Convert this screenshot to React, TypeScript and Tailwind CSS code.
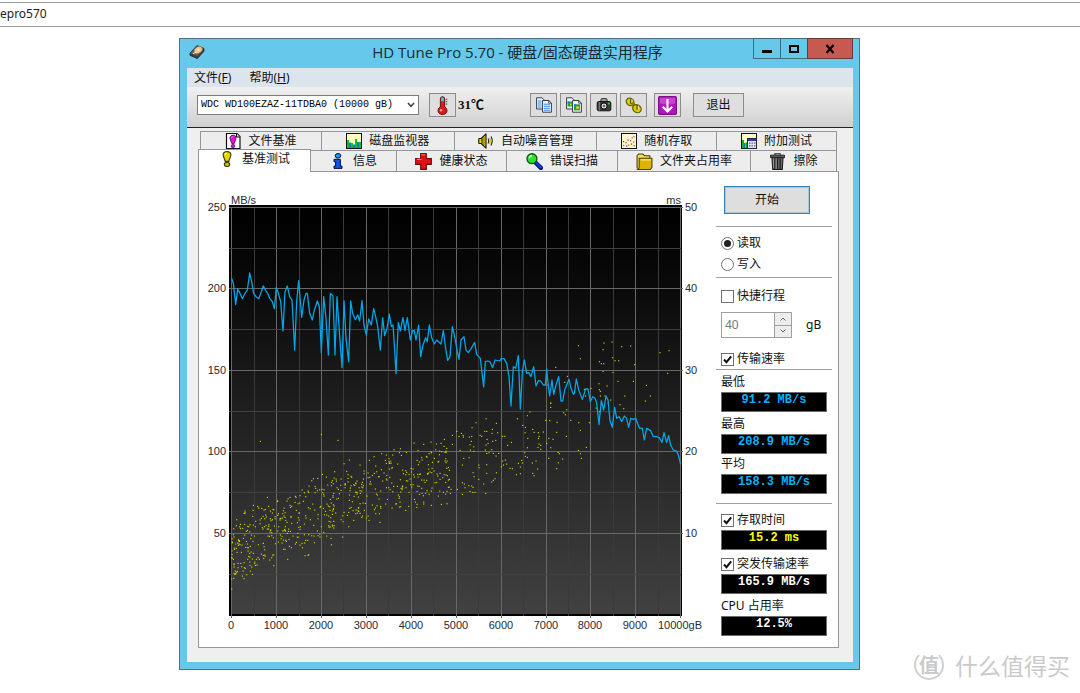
import type { ReactNode } from "react";

/* ---------- chart data (units: thirds of a chart pixel) ---------- */

const TRANSFER =
  "95,280 100,295 107,358 113,312 120,325 127,341 135,325 142,315 149,264 155,290 161,325 168,335 176,341 184,320 190,303 197,316 203,325 209,340 217,350 223,371 229,307 235,325 242,350 249,438 255,320 262,303 269,335 276,345 284,495 290,350 296,287 305,397 312,345 318,325 322,325 329,385 337,405 343,375 352,348 358,365 364,503 371,335 378,400 385,510 391,325 399,333 405,510 411,335 418,440 426,548 432,347 438,460 446,530 452,348 458,385 466,404 473,390 479,408 486,347 492,420 499,450 506,402 514,420 521,371 527,395 533,425 541,495 548,398 554,452 561,430 568,387 574,425 579,420 583,480 588,566 595,412 601,438 609,398 615,437 622,398 631,465 638,437 643,437 648,465 656,420 662,515 669,480 677,458 682,470 688,420 695,458 703,477 710,465 723,477 730,437 737,490 743,526 750,515 757,425 765,460 772,500 777,523 783,465 792,455 798,495 805,503 812,493 824,472 830,508 841,520 851,606 856,530 862,528 870,530 878,548 885,525 900,528 903,521 912,521 920,535 927,575 933,663 940,545 947,550 955,512 961,672 967,560 973,525 980,565 986,563 993,575 1001,545 1008,603 1015,587 1022,588 1030,600 1036,600 1040,552 1045,605 1049,633 1056,585 1061,628 1068,600 1076,575 1083,648 1088,648 1094,615 1107,583 1113,610 1120,628 1123,625 1129,582 1136,615 1147,643 1157,612 1164,612 1171,650 1178,635 1185,640 1190,654 1197,718 1204,647 1211,675 1218,633 1224,645 1230,707 1237,727 1244,667 1250,700 1258,695 1265,710 1273,693 1280,700 1286,727 1292,700 1300,703 1307,700 1318,729 1327,730 1333,765 1340,730 1352,737 1360,755 1370,755 1378,758 1386,772 1392,743 1400,773 1406,752 1412,780 1420,795 1430,798 1435,810 1442,838";

const SLOW_SEEKS =
  "415,482 421,521 347,547 323,600 382,574 374,592 332,654 433,613 436,633 453,610 492,474 516,471 489,494 545,485 572,483 518,518 525,527 536,527 478,530 484,536 491,536 489,559 519,562 584,539 660,503 687,497 683,565 619,601 580,589 534,589 631,633 616,648 554,633 477,596 478,614 481,619 501,603 481,633 495,633 512,645 505,655 540,659 551,671 468,669 478,680";

const SEEKS =
  "0,250 8,263 5,185 15,187 13,148 20,175 37,136 37,163 20,235 25,232 22,257 25,270 28,268 25,292 33,298 10,307 17,312 31,310 4,343 50,124 52,298 60,181 57,139 64,130 69,136 70,141 67,225 71,205 87,203 67,278 67,313 73,282 75,293 86,287 95,288 90,304 99,292 98,307 105,307 99,248 102,260 88,141 95,139 94,154 90,164 101,170 91,180 101,184 96,113 108,98 116,225 117,233 116,268 131,282 137,310 120,136 125,139 138,86 134,124 140,124 141,148 138,165 144,160 136,180 147,188 140,190 140,224 140,250 157,118 156,130 169,100 173,128 167,151 158,154 155,179 160,190 168,198 176,190 169,248 155,276 160,271 165,266 188,139 194,139 203,166 214,157 184,230 188,213 196,210 190,225 200,222 210,235 217,236 232,86 248,106 262,77 270,66 256,112 255,128 263,145 262,173 254,188 256,199 262,202 245,211 247,219 235,220 241,231 229,254 241,251 278,118 282,127 277,219 288,213 282,257 278,250 293,237 295,128 297,139 310,126 295,145 297,162 302,166 294,172 302,178 317,91 329,92 332,40 332,52 320,160 326,145 339,148 332,173 326,205 351,97 350,127 354,187 358,191 368,207 355,218 350,236 380,59 376,74 371,68 392,91 379,139 416,98 448,98 421,121 439,172 415,181 421,191 424,205";

type Point = [number, number];

const parse = (list: string, dx: number, dy: number): Point[] =>
  list.split(" ").map((pair) => {
    const [x, y] = pair.split(",").map(Number);
    return [x + dx, y + dy];
  });

/* Upper and lower edge of the dense part of the cloud: [x, top, bottom] */
const BAND: [number, number, number][] = [
  [95, 1010, 1225],
  [135, 970, 1200],
  [200, 945, 1150],
  [300, 880, 1125],
  [420, 830, 1080],
  [500, 805, 1040],
  [600, 770, 1000],
  [700, 750, 980],
  [750, 745, 955],
];

function denseCloud(): Point[] {
  let seed = 20;
  const rnd = () => {
    seed = (seed + 0x6d2b79f5) | 0;
    let t = Math.imul(seed ^ (seed >>> 15), 1 | seed);
    t = (t + Math.imul(t ^ (t >>> 7), 61 | t)) ^ t;
    return ((t ^ (t >>> 14)) >>> 0) / 4294967296;
  };
  const out: Point[] = [];
  for (let i = 0; i < 590; i++) {
    const x = 95 + 655 * Math.pow(rnd(), 1.2);
    let k = 0;
    while (k < BAND.length - 2 && BAND[k + 1][0] < x) k++;
    const [x0, t0, b0] = BAND[k];
    const [x1, t1, b1] = BAND[k + 1];
    const f = (x - x0) / (x1 - x0);
    const top = t0 + (t1 - t0) * f;
    const bottom = b0 + (b1 - b0) * f;
    const depth = rnd() * 0.75 + rnd() * 0.25;
    out.push([Math.round(x), Math.round(top + (bottom - top) * depth)]);
  }
  return out;
}

const DOTS: Point[] = [
  ...denseCloud(),
  [181, 769],
  [364, 748],
  [414, 766],
  [202, 937],
  [160, 961],
  [134, 985],
  ...parse(SEEKS, 720, 615),
  ...parse(SLOW_SEEKS, 720, 0),
];

const gridX = (i: number) => Math.round(31.2 + 22.45 * i) + 0.5;
const gridY = (i: number) => Math.round(21.9 + 40.75 * i) + 0.5;
const range = (n: number) => Array.from({ length: n }, (_, i) => i);

function Chart() {
  return (
    <svg viewBox="-1 0 517 450" className="block h-auto w-full" role="img" aria-label="MB/s">
      <defs>
        <linearGradient id="plot" x1="0" y1="0" x2="0" y2="1">
          <stop offset="0" stopColor="#000" />
          <stop offset="0.2" stopColor="#0a0a0a" />
          <stop offset="0.6" stopColor="#262626" />
          <stop offset="1" stopColor="#414141" />
        </linearGradient>
      </defs>
      <rect x="29" y="20" width="453" height="411" fill="#000" />
      <rect x="31" y="22" width="450" height="407" fill="url(#plot)" />
      <g strokeWidth="1">
        {range(21).map((i) => (
          <path key={i} d={`M${gridX(i)} 22V${i % 2 ? 431 : 433}`} stroke={i % 2 ? "#3a3a3a" : "#686868"} />
        ))}
        {range(10).map((i) => (
          <path key={i} d={`M29 ${gridY(i)}H${i % 2 ? 481 : 483}`} stroke={i % 2 ? "#404040" : "#686868"} />
        ))}
      </g>
      <g transform="scale(0.33333)">
        {DOTS.map(([x, y], i) => (
          <rect key={i} x={x - 1.5} y={y - 1.5} width="3.4" height="3.4" fill="#d8d800" />
        ))}
        <polyline points={TRANSFER} fill="none" stroke="#00a8ea" strokeWidth="3.8" strokeLinejoin="round" />
      </g>
      <g className="fill-[#2a2a33] font-['Liberation_Sans',sans-serif] text-[11px]">
        <text x="31" y="19">MB/s</text>
        <text x="481" y="19" textAnchor="end">ms</text>
        {range(5).map((i) => (
          <text key={i} x="26" y={gridY(i * 2) + 3} textAnchor="end">{250 - i * 50}</text>
        ))}
        {range(5).map((i) => (
          <text key={i} x="485" y={gridY(i * 2) + 3}>{50 - i * 10}</text>
        ))}
        {range(10).map((i) => (
          <text key={i} x={gridX(i * 2) - 0.5} y="444" textAnchor="middle">{i * 1000}</text>
        ))}
        <text x="458" y="444">10000gB</text>
      </g>
    </svg>
  );
}

/* ---------- icons ---------- */

const Icon = ({ children, size = "size-4" }: { children: ReactNode; size?: string }) => (
  <svg viewBox="0 0 16 16" className={`${size} shrink-0`} aria-hidden="true">
    {children}
  </svg>
);

const FileBenchIcon = () => (
  <Icon>
    <path d="M1.5.5H12L15 3.5V15.5H1.5Z" fill="#fff" stroke="#111" strokeWidth="1.2" />
    <path d="M11.5.5V4H15" fill="#ddd" stroke="#111" />
    <path d="M8 2.2C10.6 2.2 11.6 4.2 10.8 6.2L9.2 10.6H6.8L5.2 6.2C4.4 4.2 5.4 2.2 8 2.2Z" fill="#e010e0" stroke="#3a003a" strokeWidth=".8" />
    <path d="M6.6 4.6L7.6 3.6" stroke="#fff" />
    <ellipse cx="8" cy="13" rx="1.9" ry="1.6" fill="#e010e0" stroke="#3a003a" strokeWidth=".7" />
  </Icon>
);

const MonitorIcon = () => (
  <Icon>
    <rect x=".5" y=".5" width="15" height="15" fill="#ffffc4" stroke="#111" />
    <path d="M1 7H3V15H1ZM5 10H7V15H5ZM9 6H11V15H9ZM13 9H15V15H13Z" fill="#12c412" />
    <path d="M3 9.5H5V15H3ZM7 11.5H9V15H7ZM11 9H13V15H11Z" fill="#1878d8" />
  </Icon>
);

const SpeakerIcon = () => (
  <Icon>
    <path d="M.6 8L8 .8V15.2Z" fill="#e8d800" stroke="#111" strokeWidth="1.1" strokeLinejoin="round" />
    <path d="M.8 5.5H4V10.5H.8Z" fill="#e8d800" stroke="#111" />
    <path d="M6 4V12" stroke="#776c00" />
    <path d="M10 5.5Q11.4 8 10 10.5M13 3.6Q15.4 8 13 12.4" fill="none" stroke="#222" strokeWidth="1.1" />
    <path d="M11.5 4.7Q13.4 8 11.5 11.3" fill="none" stroke="#d6c800" strokeWidth="1.2" />
  </Icon>
);

const RandomIcon = () => (
  <Icon>
    <rect x=".5" y=".5" width="15" height="15" fill="#fff8c8" stroke="#111" />
    <path d="M2 12H3.2V13.2H2ZM4.5 9H5.7V10.2H4.5ZM7 11.5H8.2V12.7H7ZM9 7H10.2V8.2H9ZM12 8.5H13.2V9.7H12ZM12.4 3H13.6V4.2H12.4Z" fill="#e84040" />
    <path d="M2 8H3.2V9.2H2ZM5 12.5H6.2V13.7H5ZM6.5 6.5H7.7V7.7H6.5ZM10 10.5H11.2V11.7H10ZM10.6 4.4H11.8V5.6H10.6ZM12.5 12H13.7V13.2H12.5Z" fill="#3838e8" />
  </Icon>
);

const ExtraIcon = () => (
  <Icon>
    <rect x=".5" y=".5" width="15" height="15" fill="#fffcd0" stroke="#111" />
    <path d="M1 7H3V15H1ZM4.5 9.5H6V15H4.5Z" fill="#12b412" />
    <path d="M3 10H4.5V15H3Z" fill="#1878d8" />
    <rect x="6.5" y="5.5" width="9" height="10" fill="#e4e4f4" stroke="#223" />
    <path d="M7 6H15V8H7Z" fill="#2040c0" />
    <path d="M8 9.4H9.4V10.8H8ZM10.5 9.4H11.9V10.8H10.5ZM8 12.2H9.4V13.6H8ZM10.5 12.2H11.9V13.6H10.5Z" fill="#2858d0" />
    <path d="M13 9.4H14.4V10.8H13ZM13 12.2H14.4V13.6H13Z" fill="#e02828" />
  </Icon>
);

const BenchIcon = () => (
  <Icon>
    <path d="M8 .6C11.6.6 12.6 3 11.5 5.4L9.8 10.4H6.2L4.5 5.4C3.4 3 4.4.6 8 .6Z" fill="#e2d800" stroke="#3a3600" strokeWidth="1.1" />
    <path d="M6.2 4.2Q6.2 2.4 7.8 2.2" fill="none" stroke="#fffbc0" strokeWidth="1.2" />
    <ellipse cx="8" cy="13.4" rx="2.7" ry="2.1" fill="#c8be00" stroke="#3a3600" strokeWidth="1.1" />
  </Icon>
);

const InfoIcon = () => (
  <Icon>
    <ellipse cx="8" cy="2.8" rx="2.8" ry="2.3" fill="#18a0e8" stroke="#001048" />
    <path d="M4 6.3H10.4V13H12V15.4H4V13H5.6V8.7H4Z" fill="#1450e0" stroke="#001048" />
  </Icon>
);

const HealthIcon = () => (
  <Icon size="size-[17px]">
    <path d="M5.3.6H10.7V5.3H15.4V10.7H10.7V15.4H5.3V10.7H.6V5.3H5.3Z" fill="#dc1414" stroke="#780808" />
    <path d="M6 1.6H9.6M6 6H1.8" stroke="#ff7a7a" />
  </Icon>
);

const ScanIcon = () => (
  <Icon size="size-[17px]">
    <path d="M8.6 8.6L14 14" stroke="#001060" strokeWidth="4" strokeLinecap="round" />
    <path d="M9.4 9.2L14 13.7" stroke="#1840f0" strokeWidth="1.8" strokeLinecap="round" />
    <circle cx="5.6" cy="5.4" r="4.7" fill="#30e030" stroke="#085808" strokeWidth="1.2" />
    <path d="M3 5Q3.4 2.8 5.6 2.6" fill="none" stroke="#c8ffc8" strokeWidth="1.3" />
  </Icon>
);

const FolderIcon = () => (
  <Icon size="size-[17px]">
    <path d="M1 14.5V2.5L2.5 1H6.5L8 2.5H13V5" fill="#f4e060" stroke="#4a3c00" />
    <path d="M3 5H15V13.5L13.5 15.5H1.5Q3 14.5 3 13Z" fill="#dcb400" stroke="#4a3c00" />
    <path d="M4.5 6.5H14" stroke="#fff2a0" />
  </Icon>
);

const TrashIcon = () => (
  <Icon size="size-[17px]">
    <path d="M5.5 1.8V.7H10.5V1.8" fill="none" stroke="#222" />
    <path d="M1.4 2H14.6V4.4H1.4Z" fill="#5a5a5a" stroke="#1a1a1a" strokeWidth=".8" />
    <path d="M2.8 4.4H13.2L12.5 15.5H3.5Z" fill="#6a6a6a" stroke="#1a1a1a" />
    <path d="M5.5 5V15M8 5V15M10.5 5V15" stroke="#222" strokeWidth="1.2" />
    <path d="M6.7 5V15M4.2 5V14" stroke="#aaa" strokeWidth=".7" />
  </Icon>
);

const Pages = ({ children }: { children?: ReactNode }) => (
  <Icon>
    <path d="M.6 .8H6L8 2.8V12H.6Z" fill="#f4f8ff" stroke="#333a4a" />
    <path d="M6.6 3.5H12.8L15.4 6V15.2H6.6Z" fill="#f4f8ff" stroke="#333a4a" />
    <path d="M12.6 3.5V6.2H15.4" fill="none" stroke="#333a4a" strokeWidth=".8" />
    {children}
  </Icon>
);

const CopyTextIcon = () => (
  <Pages>
    <path d="M1.8 4H5.6M1.8 6H5.6M1.8 8H5.6M1.8 10H5.6M8 7.2H14M8 9.2H14M8 11.2H14M8 13.2H14" stroke="#2f86dc" />
  </Pages>
);

const CopyImageIcon = () => (
  <Pages>
    <path d="M1.6 4.5H6V9.5H1.6Z" fill="#18a838" />
    <path d="M8 7.3H14V13.4H8Z" fill="#18a838" />
    <path d="M1.6 4.5H3.8V6.7H1.6ZM8 7.3H10.2V9.4H8Z" fill="#2878e0" />
    <circle cx="11.6" cy="10.6" r="1.6" fill="#e8c820" />
    <path d="M4 6.5H5.6V8.2H4Z" fill="#e8c820" />
  </Pages>
);

const CameraIcon = () => (
  <Icon>
    <path d="M5 4.5V2.5Q5 1.7 6 1.7H10Q11 1.7 11 2.5V4.5" fill="#aaa" stroke="#222" />
    <rect x="1.2" y="4.5" width="13.6" height="9.3" rx="1.6" fill="#3a3a3a" stroke="#111" />
    <path d="M3.3 5V13.5" stroke="#888" />
    <circle cx="8" cy="9" r="3.1" fill="#d8dcdc" stroke="#000" />
    <circle cx="8" cy="9" r="1.3" fill="#667" />
    <circle cx="12.9" cy="6.6" r="1.1" fill="#28c828" />
  </Icon>
);

const ToolsIcon = () => (
  <Icon size="size-[17px]">
    <ellipse cx="4.8" cy="4.6" rx="3.9" ry="3.2" transform="rotate(35 4.8 4.6)" fill="#d8cc10" stroke="#6a6200" strokeWidth="1.2" />
    <path d="M6 5L11 10" stroke="#8a8000" strokeWidth="3" />
    <ellipse cx="11.2" cy="11" rx="4.2" ry="3.5" transform="rotate(35 11.2 11)" fill="#d8cc10" stroke="#6a6200" strokeWidth="1.2" />
    <path d="M5.4 2V6M11.4 7.5V12" stroke="#4a4400" strokeWidth="1.2" />
    <path d="M6.5 2.2V5.6M12.5 8V11.6" stroke="#fff9a0" strokeWidth=".8" />
  </Icon>
);

const SaveIcon = () => (
  <Icon size="size-[19px]">
    <rect x=".5" y=".5" width="15" height="15" rx="1" fill="#b414c0" stroke="#7c1088" />
    <path d="M1.5 1.5H14.5V6Q8 8 1.5 6Z" fill="#cc40d6" />
    <path d="M8 2.5V12.5M4 9L8 13L12 9" fill="none" stroke="#fff" strokeWidth="1.8" />
  </Icon>
);

const ThermoIcon = () => (
  <Icon size="size-[19px]">
    <path d="M6.2 2.4Q6.2.6 8 .6T9.8 2.4V9.2Q11.8 10.2 11.8 12.2Q11.6 15.5 8 15.5T4.2 12.2Q4.2 10.2 6.2 9.2Z" fill="#e01818" stroke="#5a1010" strokeWidth=".8" />
    <path d="M6.8 2.2Q6.8 1.2 8 1.2T9.2 2.2V4.4H6.8Z" fill="#48c8e0" />
    <path d="M10.7 2.8H12M10.7 4.8H12M10.7 6.8H12" stroke="#333" strokeWidth=".8" />
    <circle cx="6.8" cy="12" r="1" fill="#ffb0b0" />
  </Icon>
);

const DriveIcon = () => (
  <Icon>
    <path d="M1 9.2L8 1.6L15 4.4V7.2L8.4 14.6L1 11.4Z" fill="#3c3c40" stroke="#2a2a2a" strokeWidth=".8" strokeLinejoin="round" />
    <path d="M1.6 9.2L8.2 2.2L14.6 4.6L8.2 12Z" fill="#66666b" />
    <ellipse cx="9.2" cy="6" rx="4.4" ry="3.2" transform="rotate(-32 9.2 6)" fill="#f0c48c" stroke="#8a5c30" strokeWidth=".5" />
    <circle cx="9.4" cy="5.9" r="1.1" fill="#fff4e0" />
    <path d="M4 9.6L7.5 8" stroke="#eee" />
  </Icon>
);

/* ---------- controls ---------- */

const ToolButton = ({ label, children }: { label: string; children: ReactNode }) => (
  <button
    type="button"
    aria-label={label}
    className="flex h-6 w-[27px] items-center justify-center border border-[#8c8c8c] bg-[#dedede]"
  >
    {children}
  </button>
);

const Tab = ({ icon, label }: { icon: ReactNode; label: string }) => (
  <button
    type="button"
    role="tab"
    aria-selected="false"
    className="flex items-center justify-center gap-[7px] overflow-hidden border-t border-r border-[#9496a0] bg-[#ededed]"
  >
    {icon}
    {label}
  </button>
);

const Check = ({ label, checked = false }: { label: string; checked?: boolean }) => (
  <label className="flex h-4 items-center gap-[3px]">
    <span className="relative flex size-[13px]">
      <input type="checkbox" defaultChecked={checked} className="peer size-[13px] appearance-none border border-[#707070] bg-white" />
      <svg viewBox="0 0 13 13" className="pointer-events-none absolute inset-0 hidden peer-checked:block" aria-hidden="true">
        <path d="M3 6.5L5.5 9.2L10.2 3.4" fill="none" stroke="#111" strokeWidth="2" />
      </svg>
    </span>
    {label}
  </label>
);

const Radio = ({ label, checked = false }: { label: string; checked?: boolean }) => (
  <label className="flex h-4 items-center gap-[3px]">
    <span className="relative flex size-[13px]">
      <input type="radio" name="mode" defaultChecked={checked} className="peer size-[13px] appearance-none rounded-full border border-[#707070] bg-white" />
      <span className="pointer-events-none absolute inset-[3px] hidden rounded-full bg-[#222] peer-checked:block" />
    </span>
    {label}
  </label>
);

const Readout = ({ value, color }: { value: string; color: string }) => (
  <output
    className={`block h-5 border border-[#6b6b6b] bg-black text-center font-['Liberation_Mono',monospace] text-xs leading-[14px] font-bold ${color}`}
  >
    {value}
  </output>
);

const Separator = () => <hr className="-mr-[5px] -ml-[5px] border-t border-[#a0a0a0]" />;

const UI = "font-['Noto_Sans','Noto_Sans_CJK_SC',sans-serif]";

export default function App() {
  return (
    <div className={`relative min-h-screen bg-white text-xs leading-4 text-[#111] ${UI}`}>
      <header className="pt-[2px]">
        <div className="flex h-[25px] items-center overflow-hidden border-y border-[#999] pb-[2px] text-[#222]">epro570</div>
      </header>

      <main className="mt-[11px] mr-[220px] ml-[179px] min-w-[600px] border border-[#55717e] bg-[#66c9eb] pr-[6px] pb-[7px] pl-[7px]">
        <div className="grid h-[29px] grid-cols-[1fr_auto_1fr]">
          <div className="flex items-center pb-1 pl-[2px]">
            <DriveIcon />
          </div>
          <h1 className="flex items-center pr-[5px] pb-1 font-['Open_Sans','Noto_Sans_CJK_SC',sans-serif] text-[15px] font-normal text-[#1a2a33]">
            HD Tune Pro 5.70 - 硬盘/固态硬盘实用程序
          </h1>
          <div className="-mt-px flex h-[21px] justify-end">
            <button type="button" aria-label="最小化" className="flex w-7 items-center justify-center border border-[#3f6d80]">
              <svg viewBox="0 0 12 10" className="w-3"><path d="M1 6H11V9H1Z" fill="#000" /></svg>
            </button>
            <button type="button" aria-label="最大化" className="flex w-[26px] items-center justify-center border-y border-[#3f6d80]">
              <svg viewBox="0 0 12 10" className="w-3"><path d="M2 2H10V8H2Z" fill="none" stroke="#000" strokeWidth="2" /></svg>
            </button>
            <button type="button" aria-label="关闭" className="flex w-[46px] items-center justify-center border border-[#6b3a38] bg-[#c75a50]">
              <svg viewBox="0 0 10 10" className="w-[10px]"><path d="M1.5 1L8.5 9M8.5 1L1.5 9" stroke="#000" strokeWidth="2.2" /></svg>
            </button>
          </div>
        </div>

        <nav className="flex h-[19px] items-center gap-[18px] bg-[#dce4ed] pl-[7px]">
          <button type="button">文件(<u>F</u>)</button>
          <button type="button">帮助(<u>H</u>)</button>
        </nav>

        <div className="flex h-[41px] items-start border-b border-[#222] bg-linear-to-b from-[#f0f0f0] to-[#d0d0d0] pt-[6px] pl-[10px]">
          <div className="relative mt-[2px] w-[222px]">
            <select
              aria-label="硬盘"
              className="block h-5 w-full appearance-none border border-[#7c7c7c] bg-white pl-[3px] font-['Liberation_Mono',monospace] text-[10px] leading-[18px] text-black"
            >
              <option>WDC WD100EZAZ-11TDBA0 (10000 gB)</option>
            </select>
            <svg viewBox="0 0 8 6" className="pointer-events-none absolute top-[7px] right-1 w-2" aria-hidden="true">
              <path d="M1 1L4 4.4L7 1" fill="none" stroke="#444" strokeWidth="1.6" />
            </svg>
          </div>
          <div className="ml-[10px]">
            <ToolButton label="温度"><ThermoIcon /></ToolButton>
          </div>
          <strong className="mt-1 ml-[2px] w-[72px] font-['Liberation_Serif','Noto_Sans_CJK_SC',serif] text-[13px]">31℃</strong>
          <div className="flex gap-[3px]">
            <ToolButton label="复制文本"><CopyTextIcon /></ToolButton>
            <ToolButton label="复制图像"><CopyImageIcon /></ToolButton>
            <ToolButton label="截图"><CameraIcon /></ToolButton>
            <ToolButton label="选项"><ToolsIcon /></ToolButton>
          </div>
          <div className="ml-[7px]">
            <ToolButton label="保存"><SaveIcon /></ToolButton>
          </div>
          <button type="button" className="ml-3 h-6 w-[51px] border border-[#8c8c8c] bg-[#dedede]">退出</button>
        </div>

        <div className="bg-[#efefef] pt-[3px] pr-[14px] pb-[14px] pl-[11px]">
          <div role="tablist" className="pr-[2px]">
            <div className="ml-[2px] grid h-[19px] grid-cols-[121fr_133fr_143fr_120fr_120fr] border-l border-[#9496a0]">
              <Tab icon={<FileBenchIcon />} label="文件基准" />
              <Tab icon={<MonitorIcon />} label="磁盘监视器" />
              <Tab icon={<SpeakerIcon />} label="自动噪音管理" />
              <Tab icon={<RandomIcon />} label="随机存取" />
              <Tab icon={<ExtraIcon />} label="附加测试" />
            </div>
            <div className="grid h-[21px] grid-cols-[113fr_86fr_110fr_111fr_133fr_86fr]">
              <button
                type="button"
                role="tab"
                aria-selected="true"
                className="z-10 -mt-px -mb-px flex items-start justify-center gap-[7px] border-x border-t border-[#9496a0] bg-white pt-px"
              >
                <BenchIcon />
                基准测试
              </button>
              <Tab icon={<InfoIcon />} label="信息" />
              <Tab icon={<HealthIcon />} label="健康状态" />
              <Tab icon={<ScanIcon />} label="错误扫描" />
              <Tab icon={<FolderIcon />} label="文件夹占用率" />
              <Tab icon={<TrashIcon />} label="擦除" />
            </div>
          </div>

          <section className="flex border border-[#9496a0] bg-white pb-[11px]">
            <div className="min-w-0 flex-1 pt-[13px]">
              <Chart />
            </div>

            <div className="mr-[6px] flex w-[116px] flex-col px-[5px] pt-[14px]">
              <button type="button" className="mx-[3px] mb-3 h-7 w-[86px] border border-[#3c7fb1] bg-[#dedede] outline-1 -outline-offset-2 outline-[#a9c6da]">开始</button>
              <Separator />
              <div className="flex flex-col gap-[5px] pt-2 pb-[5px]">
                <Radio label="读取" checked />
                <Radio label="写入" />
              </div>
              <Separator />
              <div className="pt-[10px] pb-2">
                <Check label="快捷行程" />
              </div>
              <div className="mb-[13px] flex items-center">
                <div className="flex h-[26px] w-[71px] border border-[#a0a0a0]">
                  <input aria-label="行程" defaultValue="40" disabled className="min-w-0 flex-1 bg-white pl-[3px] text-[#777]" />
                  <span className="flex w-[17px] flex-col border-l border-[#a0a0a0]">
                    <button type="button" aria-label="增加" className="flex flex-1 items-center justify-center border-b border-[#a0a0a0] bg-[#ededed]">
                      <svg viewBox="0 0 6 4" className="w-[6px]"><path d="M.5 3.5L3 1L5.5 3.5" fill="none" stroke="#666" /></svg>
                    </button>
                    <button type="button" aria-label="减少" className="flex flex-1 items-center justify-center bg-[#ededed]">
                      <svg viewBox="0 0 6 4" className="w-[6px]"><path d="M.5 .5L3 3L5.5 .5" fill="none" stroke="#666" /></svg>
                    </button>
                  </span>
                </div>
                <span className="ml-[14px]">gB</span>
              </div>
              <Check label="传输速率" checked />
              <div className="mt-[2px]">
                <Separator />
              </div>
              <p className="mt-1 mb-[2px]">最低</p>
              <Readout value="91.2 MB/s" color="text-[#00b4ff]" />
              <p className="mt-1 mb-[2px]">最高</p>
              <Readout value="208.9 MB/s" color="text-[#00b4ff]" />
              <p className="mt-[2px] mb-[2px]">平均</p>
              <Readout value="158.3 MB/s" color="text-[#00b4ff]" />
              <div className="mt-[9px] mb-2">
                <Separator />
              </div>
              <Check label="存取时间" checked />
              <div className="mt-[2px] mb-[6px]">
                <Readout value="15.2 ms" color="text-[#ffff00]" />
              </div>
              <Check label="突发传输速率" checked />
              <div className="mt-[2px]">
                <Readout value="165.9 MB/s" color="text-white" />
              </div>
              <p className="mt-1 mb-[2px]">CPU 占用率</p>
              <Readout value="12.5%" color="text-white" />
            </div>
          </section>
        </div>
      </main>

      <div className="absolute right-[10px] bottom-3 flex items-center gap-[11px] font-['Noto_Sans_CJK_SC',sans-serif] text-[#cacaca]">
        <span className="flex size-[30px] items-center justify-center rounded-full border-2 border-[#cfcfcf] border-t-transparent text-[20px] font-bold">
          值
        </span>
        <span className="text-[23px] leading-8">什么值得买</span>
      </div>
    </div>
  );
}
